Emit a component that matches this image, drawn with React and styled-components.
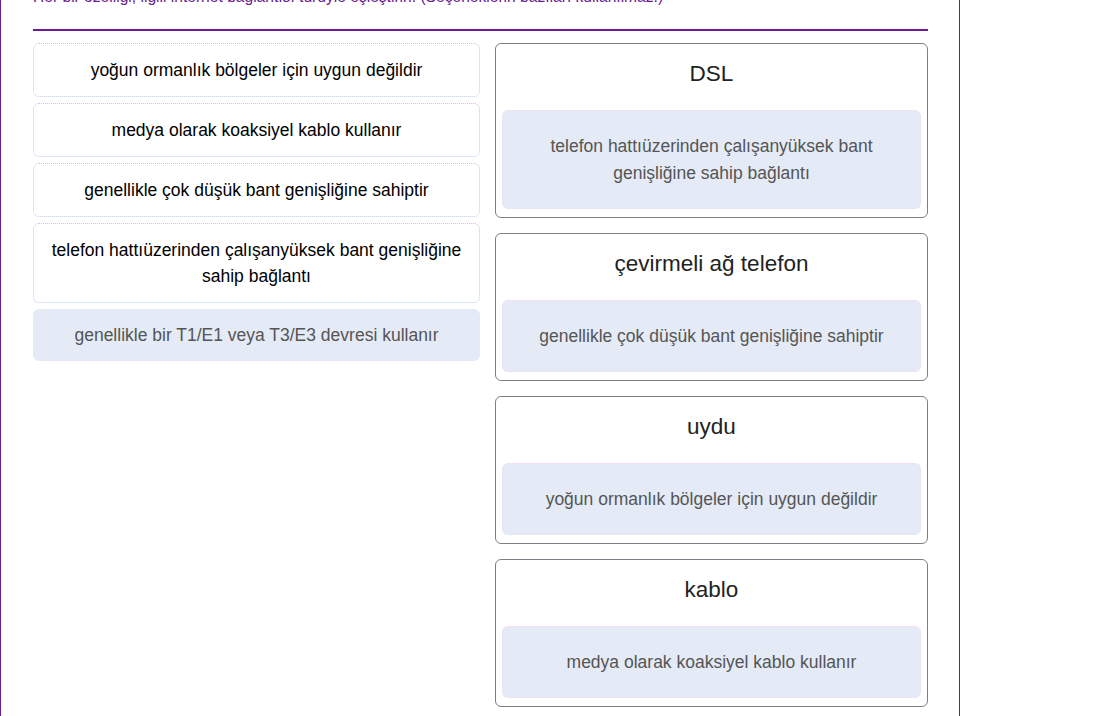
import React from "react";
import styled, { createGlobalStyle } from "styled-components";

const Global = createGlobalStyle`
  html, body { margin: 0; padding: 0; background: #fff; }
  body { font-family: "Liberation Sans", Arial, sans-serif; overflow: hidden; }
`;

const Page = styled.div`
  width: 960px;
  box-sizing: border-box;
  border-left: 1px solid #6a1b8f;
  border-right: 1px solid #6a1b8f;
  padding: 0 31px 40px 32px;
  margin-top: -16px;
  min-height: 800px;
`;

const Instruction = styled.p`
  margin: 0;
  font-size: 15.6px;
  line-height: 26px;
  color: #6a1b8f;
  padding-bottom: 19px;
  border-bottom: 2px solid #6a1b8f;
  margin-bottom: 12px;
`;

const Columns = styled.div`
  display: grid;
  grid-template-columns: 447px 433px;
  column-gap: 15px;
  align-items: start;
`;

const Pool = styled.div`
  display: flex;
  flex-direction: column;
  gap: 6px;
`;

const Option = styled.div`
  box-sizing: border-box;
  border-radius: 6px;
  border: 1px dotted ${(p) => (p.$used ? "transparent" : "#b9c9de")};
  background: ${(p) => (p.$used ? "#e4ebf6" : "#fff")};
  color: ${(p) => (p.$used ? "#555" : "#000")};
  padding: ${(p) => (p.$used ? "12px 15px" : "13px 15px")};
  font-size: 17.5px;
  line-height: 26px;
  text-align: center;
  margin-top: ${(p) => (p.$used ? "0" : "0")};
`;

const Targets = styled.div`
  display: flex;
  flex-direction: column;
  gap: 15px;
`;

const Card = styled.div`
  border: 1px solid #7b8088;
  border-radius: 6px;
  padding: 0 6px 8px;
`;

const CardTitle = styled.div`
  font-size: 22.5px;
  line-height: 26px;
  color: #222;
  text-align: center;
  padding: 17px 0 23px;
`;

const Drop = styled.div`
  border: 1px dotted #f1dcef;
  border-radius: 6px;
  background: #e4ebf6;
  color: #555;
  font-size: 17.5px;
  line-height: 27px;
  text-align: center;
  padding: 21.5px 30px;
`;

const options = [
  { text: "yoğun ormanlık bölgeler için uygun değildir" },
  { text: "medya olarak koaksiyel kablo kullanır" },
  { text: "genellikle çok düşük bant genişliğine sahiptir" },
  { text: "telefon hattıüzerinden çalışanyüksek bant genişliğine sahip bağlantı" },
  { text: "genellikle bir T1/E1 veya T3/E3 devresi kullanır", used: true },
];

const targets = [
  { title: "DSL", answer: "telefon hattıüzerinden çalışanyüksek bant genişliğine sahip bağlantı" },
  { title: "çevirmeli ağ telefon", answer: "genellikle çok düşük bant genişliğine sahiptir" },
  { title: "uydu", answer: "yoğun ormanlık bölgeler için uygun değildir" },
  { title: "kablo", answer: "medya olarak koaksiyel kablo kullanır" },
];

export default function App() {
  return (
    <>
      <Global />
      <Page>
        <Instruction>
          Her bir özelliği, ilgili internet bağlantısı türüyle eşleştirin. (Seçeneklerin bazıları kullanılmaz.)
        </Instruction>
        <Columns>
          <Pool>
            {options.map((o) => (
              <Option key={o.text} $used={o.used}>
                {o.text}
              </Option>
            ))}
          </Pool>
          <Targets>
            {targets.map((t) => (
              <Card key={t.title}>
                <CardTitle>{t.title}</CardTitle>
                <Drop>{t.answer}</Drop>
              </Card>
            ))}
          </Targets>
        </Columns>
      </Page>
    </>
  );
}
